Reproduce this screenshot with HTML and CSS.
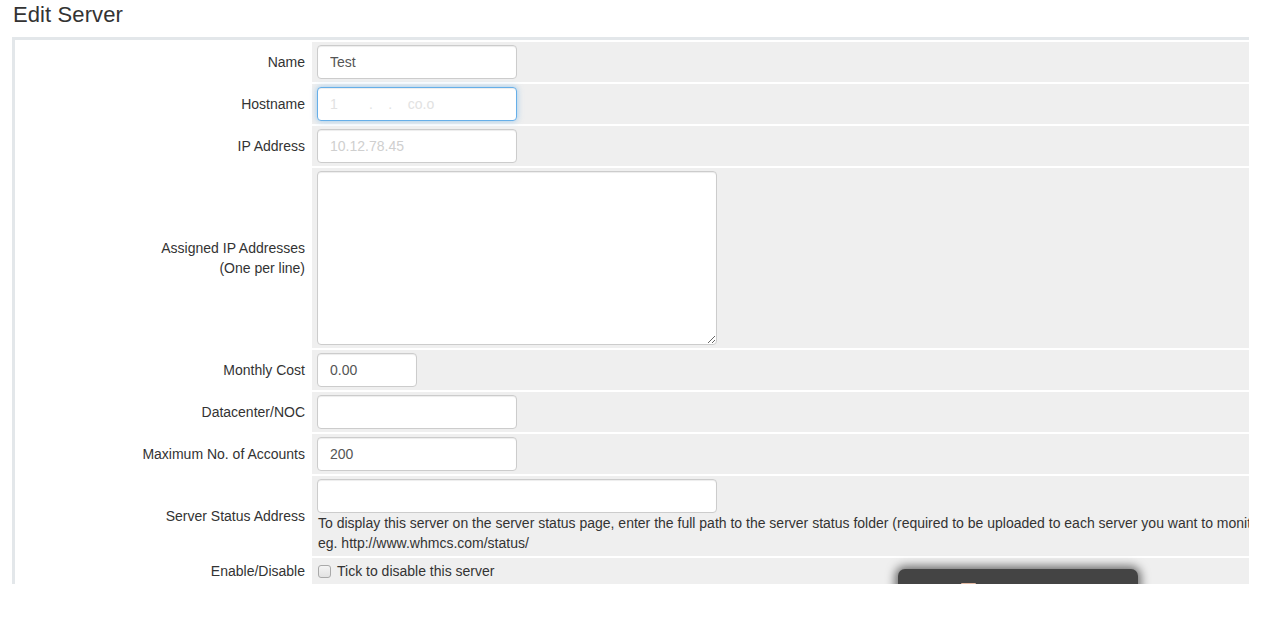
FILE: index.html
```html
<!DOCTYPE html>
<html>
<head>
<meta charset="utf-8">
<title>Edit Server</title>
<link rel="stylesheet" href="styles.css">
</head>
<body>
<div class="viewport">
  <div class="page">
    <h1 class="title">Edit Server</h1>
    <div class="panel">
      <table class="form">
        <tr>
          <td class="fieldlabel">Name</td>
          <td class="fieldarea"><input class="form-control w200" type="text" value="Test"></td>
        </tr>
        <tr>
          <td class="fieldlabel">Hostname</td>
          <td class="fieldarea"><input class="form-control w200 focus faint" type="text" value="1        .    .    co.o"></td>
        </tr>
        <tr>
          <td class="fieldlabel">IP Address</td>
          <td class="fieldarea"><input class="form-control w200 faint2" type="text" value="10.12.78.45"></td>
        </tr>
        <tr>
          <td class="fieldlabel">Assigned IP Addresses<br>(One per line)</td>
          <td class="fieldarea"><textarea class="form-control w400 tall"></textarea></td>
        </tr>
        <tr>
          <td class="fieldlabel">Monthly Cost</td>
          <td class="fieldarea"><input class="form-control w100" type="text" value="0.00"></td>
        </tr>
        <tr>
          <td class="fieldlabel">Datacenter/NOC</td>
          <td class="fieldarea"><input class="form-control w200" type="text" value=""></td>
        </tr>
        <tr>
          <td class="fieldlabel">Maximum No. of Accounts</td>
          <td class="fieldarea"><input class="form-control w200" type="text" value="200"></td>
        </tr>
        <tr>
          <td class="fieldlabel">Server Status Address</td>
          <td class="fieldarea">
            <input class="form-control w400" type="text" value="">
            <div class="help">To display this server on the server status page, enter the full path to the server status folder (required to be uploaded to each server you want to monitor)<br>eg. http://www.whmcs.com/status/</div>
          </td>
        </tr>
        <tr>
          <td class="fieldlabel">Enable/Disable</td>
          <td class="fieldarea"><label class="checkline"><input type="checkbox" class="check"> Tick to disable this server</label></td>
        </tr>
        <tr>
          <td class="fieldlabel">&nbsp;</td>
          <td class="fieldarea">&nbsp;</td>
        </tr>
      </table>
    </div>
  </div>
  <div class="toast"><span class="toast-icon"></span></div>
</div>
</body>
</html>
```

FILE: styles.css
```css
html, body {
  margin: 0;
  padding: 0;
  background: #fff;
}
body {
  font-family: "Liberation Sans", Arial, Helvetica, sans-serif;
  font-size: 14px;
  color: #333;
}
.viewport {
  width: 1249px;
  height: 584px;
  overflow: hidden;
  position: relative;
}
.page {
  padding-left: 12px;
  width: 1400px;
}
.title {
  margin: 2px 0 10px 1px;
  font-size: 22px;
  line-height: 25px;
  font-weight: normal;
  color: #333;
  letter-spacing: 0.1px;
}
.panel {
  border: 3px solid #e3e7ea;
  background: #fff;
}
.form {
  width: 100%;
  border-collapse: separate;
  border-spacing: 2px;
}
.form td {
  padding: 3px 5px;
  vertical-align: middle;
  line-height: 20px;
}
.fieldlabel {
  width: 283px;
  text-align: right;
  background: #fff;
}
.fieldarea {
  background: #efefef;
}
.form-control {
  display: block;
  box-sizing: border-box;
  height: 34px;
  padding: 6px 12px;
  font-family: "Liberation Sans", Arial, Helvetica, sans-serif;
  font-size: 14px;
  line-height: 20px;
  color: #555;
  background: #fff;
  border: 1px solid #ccc;
  border-radius: 4px;
  box-shadow: inset 0 1px 1px rgba(0, 0, 0, 0.075);
  margin: 0;
  outline: none;
}
.w100 { width: 100px; }
.w200 { width: 200px; }
.w400 { width: 400px; }
.tall {
  height: 174px;
  resize: both;
}
.focus {
  border-color: #66afe9;
  box-shadow: inset 0 1px 1px rgba(0, 0, 0, 0.075), 0 0 6px rgba(102, 175, 233, 0.6);
}
.faint {
  color: #e2e2e2;
}
.faint2 {
  color: #cfcfcf;
}
.help {
  white-space: nowrap;
  line-height: 20px;
  padding-left: 1px;
}
.checkline {
  display: flex;
  align-items: center;
  gap: 6px;
  white-space: nowrap;
}
.check {
  -webkit-appearance: none;
  appearance: none;
  box-sizing: border-box;
  margin: 0 0 0 1px;
  width: 13px;
  height: 13px;
  border: 1px solid #a9a9a9;
  border-radius: 3px;
  background: linear-gradient(#f4f4f4, #e2e2e2);
}
.toast {
  position: absolute;
  left: 898px;
  top: 569px;
  width: 240px;
  height: 60px;
  background: #444;
  border-radius: 7px;
  box-shadow: 0 0 10px 3px rgba(0, 0, 0, 0.55);
}
.toast-icon {
  position: absolute;
  left: 63px;
  top: 14px;
  width: 15px;
  height: 16px;
  background: #e3b9a3;
  border-radius: 1px;
}
```
